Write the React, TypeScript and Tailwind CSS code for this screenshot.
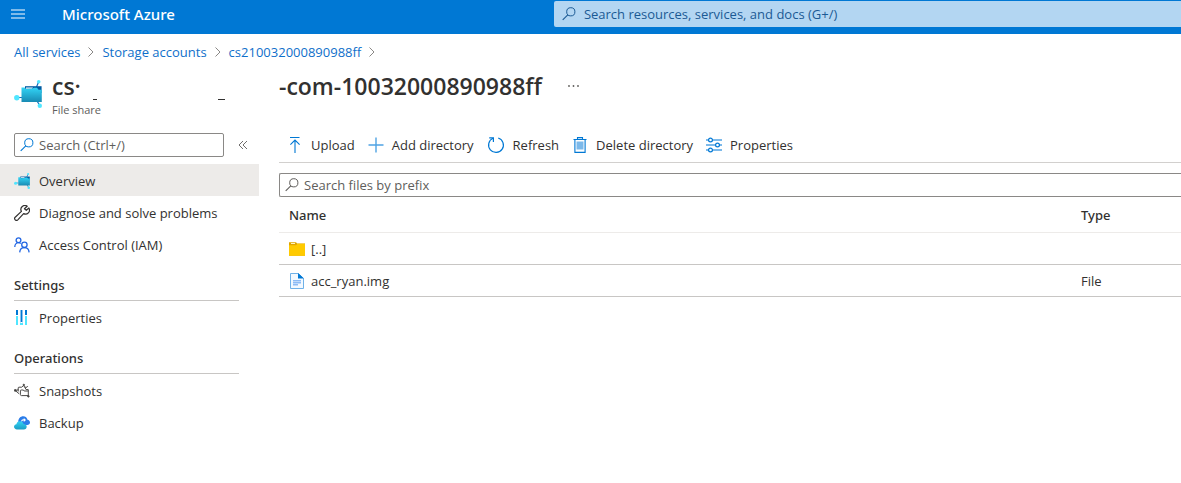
import React from "react";

type IconProps = { className?: string };

function SearchIcon({ className = "" }: IconProps) {
  return (
    <svg viewBox="0 0 14 14" className={`shrink-0 ${className}`} fill="none" stroke="currentColor" aria-hidden="true">
      <circle cx="8.8" cy="4.8" r="4.1" strokeWidth="1" />
      <path d="M5.8 7.8 L0.7 12.9" strokeWidth="1.1" />
    </svg>
  );
}

function ChevronIcon() {
  return (
    <svg viewBox="0 0 8 12" className="h-3 w-2 shrink-0" fill="none" stroke="#8a8886" aria-hidden="true">
      <path d="M1.5 1.5 L6 6 L1.5 10.5" />
    </svg>
  );
}

function FileShareIcon({ className = "" }: IconProps) {
  const id = React.useId();
  return (
    <svg viewBox="0 0 28 28" className={`shrink-0 ${className}`} aria-hidden="true">
      <defs>
        <linearGradient id={id} x1="0" y1="0" x2="0" y2="1">
          <stop offset="0" stopColor="#32d4f5" />
          <stop offset="1" stopColor="#198ab3" />
        </linearGradient>
      </defs>
      <path d="M3 17.5 H8 M22.5 7 L24.6 2 M23 21 L25.8 25.5" stroke="#0f6cbd" strokeWidth="1.2" />
      <path d="M11 6.2 H27.6 V13 H11 Z" fill="#005ba1" />
      <path d="M12 7.4 H19 L18 8.8 H12 Z" fill="#fff" />
      <path d="M7.5 7.5 H10.6 L12 9 L18.6 8.6 L20 7.8 H23 L24.5 9.8 H27.8 V22 H7.5 Z" fill={`url(#${id})`} />
      <circle cx="2.8" cy="17.8" r="2.7" fill="#50e6ff" />
      <circle cx="24.7" cy="1.8" r="1.8" fill="#50e6ff" />
      <circle cx="25.8" cy="25.8" r="2.2" fill="#50e6ff" />
    </svg>
  );
}

function WrenchIcon() {
  return (
    <svg viewBox="0 0 16 16" className="h-4 w-4" fill="none" stroke="#323130" strokeWidth="1.2" strokeLinejoin="round" aria-hidden="true">
      <path d="M13.2 1.2 A4 4 0 0 0 7.4 6.4 L1.2 12.2 A1.7 1.7 0 0 0 3.8 14.8 L9.6 8.6 A4 4 0 0 0 14.9 3 L12.3 5.3 L10.4 3.8 Z" />
    </svg>
  );
}

function PeopleIcon() {
  return (
    <svg viewBox="0 0 16 16" className="h-4 w-4" fill="none" stroke="#2266e3" strokeWidth="1.3" aria-hidden="true">
      <circle cx="4.5" cy="3.2" r="2.4" />
      <path d="M0.8 10 C0.8 7.5 2.5 5.7 4.5 5.7 C5.4 5.7 6.2 6 6.8 6.5" />
      <circle cx="10.4" cy="7.8" r="2.7" />
      <path d="M5.7 15.4 C5.9 12.6 7.9 10.6 10.4 10.6 C12.9 10.6 14.9 12.6 15.1 15.4" />
    </svg>
  );
}

function BarsIcon() {
  return (
    <svg viewBox="0 0 16 16" className="h-4 w-4" aria-hidden="true">
      <path d="M2 0 H4 V5 H2 Z M11 0 H13 V5 H11 Z M6.5 0 H8.5 V12 H6.5 Z" fill="#0078d4" />
      <path d="M2 6 H4 V15 H2 Z M11 6 H13 V15 H11 Z M6 13 H9 V15 H6 Z" fill="#50e6ff" />
      <path d="M6 0 H6.5 V13 H6 Z M8.5 0 H9 V13 H8.5 Z" fill="#9cc9ef" />
    </svg>
  );
}

function SnapshotIcon() {
  return (
    <svg viewBox="0 0 16 16" className="h-4 w-4" fill="none" stroke="#4a4846" aria-hidden="true">
      <path d="M1.2 7.4 L4.4 6.8 M4.2 8.5 V5 Q4.2 4.2 5 4.2 H7.6 L9.8 2.4 L10.6 4.2 H13 L13.8 3.2" />
      <path d="M1.8 8 L5.2 10.8 M6.4 11.4 V7.8 Q6.4 7 7.2 7 H9.4 L10.2 8 H14.3 V12.6 H7.4 Q6.4 12.6 6.4 11.4 M10.8 4.2 L12 6.6 H14.3 V8" />
      <circle cx="1.2" cy="7.4" r="0.9" fill="#323130" />
      <circle cx="9.8" cy="1.9" r="0.7" fill="#323130" />
      <circle cx="14.4" cy="13.3" r="0.8" fill="#323130" />
    </svg>
  );
}

function BackupIcon() {
  return (
    <svg viewBox="0 0 16 16" className="h-4 w-4" aria-hidden="true">
      <defs>
        <linearGradient id="backup-cloud" x1="0" y1="0" x2="0" y2="1">
          <stop offset="0" stopColor="#32d4f5" />
          <stop offset="1" stopColor="#1c9dc4" />
        </linearGradient>
      </defs>
      <path d="M4.2 6.5 C4.4 3.4 6.4 1.2 9.2 1.2 C11.6 1.2 13.2 2.7 13.5 4.8 C15 5 16 6.1 16 7.5 C16 9 14.8 10 13.3 10 H6 Z" fill="#2b7de9" />
      <path d="M7.2 6.4 C7.2 4.8 8.2 3.9 9.8 4.2 V3 L12 5 L9.8 6.9 V5.6 C8.8 5.4 8.2 5.8 8 6.6 Z" fill="#fff" />
      <path d="M3 14.4 C1.3 14.4 0 13.3 0 11.8 C0 10.4 1.1 9.4 2.4 9.2 C2.7 7.4 4.1 6.2 6 6.2 C7.8 6.2 9.2 7.3 9.6 9 C11.4 9 12.7 10.1 12.7 11.7 C12.7 13.3 11.5 14.4 9.9 14.4 Z" fill="url(#backup-cloud)" />
    </svg>
  );
}

function UploadIcon() {
  return (
    <svg viewBox="0 0 16 16" className="h-4 w-4" fill="none" stroke="#0078d4" aria-hidden="true">
      <path d="M3 0.5 H12.5 M8 16 V3.2 M3.4 7.6 L8 3 L12.6 7.6" strokeWidth="1.1" />
    </svg>
  );
}

function PlusIcon() {
  return (
    <svg viewBox="0 0 16 16" className="h-4 w-4" fill="none" stroke="#4fa3e3" aria-hidden="true">
      <path d="M0.5 8 H15.5 M8 0.5 V15.5" strokeWidth="1.4" />
    </svg>
  );
}

function RefreshIcon() {
  return (
    <svg viewBox="0 0 18 18" className="h-[18px] w-[18px]" fill="none" stroke="#0078d4" strokeWidth="1.2" aria-hidden="true">
      <path d="M11.2 2 A7.4 7.4 0 1 1 6 2.3" />
      <path d="M2.2 1.8 H6.4 V6" />
    </svg>
  );
}

function TrashIcon() {
  return (
    <svg viewBox="0 0 16 16" className="h-4 w-4" aria-hidden="true">
      <path d="M4.5 4.5 H11.5 V12.5 H4.5 Z" fill="#7cb9ea" />
      <path d="M1.5 2.5 H14.5 M5.5 2.5 V0.6 H10.5 V2.5 M2.9 2.5 V15.4 H13.1 V2.5" fill="none" stroke="#0078d4" strokeWidth="1.1" />
    </svg>
  );
}

function SlidersIcon() {
  return (
    <svg viewBox="0 0 16 16" className="h-4 w-4" aria-hidden="true">
      <path d="M0 3 H16 M0 8 H16 M0 13 H16" stroke="#7cb9ea" strokeWidth="1.8" />
      <g fill="#fff" stroke="#0078d4" strokeWidth="1.2">
        <circle cx="4.5" cy="3" r="1.9" />
        <circle cx="11.5" cy="8" r="1.9" />
        <circle cx="4.5" cy="13" r="1.9" />
      </g>
    </svg>
  );
}

function FolderIcon() {
  return (
    <svg viewBox="0 0 16 16" className="h-4 w-4 shrink-0" aria-hidden="true">
      <path d="M0 1.2 H7 L8.2 2.6 H16 V14.7 H0 Z" fill="#dfa500" />
      <path d="M2 2 H6 V3 H2 Z" fill="#fff3c0" />
      <path d="M0 4.2 H7 L8.5 2.8 H16 V14.7 H0 Z" fill="#ffca00" />
    </svg>
  );
}

function FileIcon() {
  return (
    <svg viewBox="0 0 16 16" className="h-4 w-4 shrink-0" aria-hidden="true">
      <path d="M1.5 0.5 H9.5 L14.5 5.5 V15.5 H1.5 Z" fill="#f3f9ff" stroke="#6fb1e8" />
      <path d="M9 0 L15 5.6 H9 Z" fill="#0078d4" />
      <path d="M4 7.8 H12 M4 9.8 H12 M4 11.8 H9" stroke="#8dbbf5" strokeWidth="1.4" />
    </svg>
  );
}

function MenuItem({ icon, label, active = false }: { icon: React.ReactNode; label: string; active?: boolean }) {
  return (
    <li>
      <a
        href="#"
        aria-current={active ? "page" : undefined}
        className={`flex h-8 items-center gap-[9px] pt-0.5 pl-3.5 ${active ? "bg-[#edebe9]" : ""}`}
      >
        <span className="flex h-4 w-4 shrink-0 items-center justify-center">{icon}</span>
        {label}
      </a>
    </li>
  );
}

function MenuSection({ title, children }: { title: string; children: React.ReactNode }) {
  return (
    <section className="pt-[9px]">
      <h2 className="mr-5 ml-3.5 flex h-8 items-center border-b border-[#c8c6c4] font-['Noto_Sans','Open_Sans',sans-serif] font-medium">
        {title}
      </h2>
      <ul>{children}</ul>
    </section>
  );
}

function ToolButton({ icon, label }: { icon: React.ReactNode; label: string }) {
  return (
    <button type="button" className="flex h-8 items-center gap-2 pt-0.5 whitespace-nowrap">
      {icon}
      {label}
    </button>
  );
}

const crumbs = ["All services", "Storage accounts", "cs210032000890988ff"];

const files = [
  { name: "[..]", type: "", icon: <FolderIcon /> },
  { name: "acc_ryan.img", type: "File", icon: <FileIcon /> },
];

export default function App() {
  return (
    <div className="min-h-screen overflow-x-hidden bg-white font-['Open_Sans','Noto_Sans',sans-serif] text-[13px] leading-5 text-[#323130]">
      <header className="flex h-[34px] items-start bg-[#0078d4] text-white">
        <div className="flex h-7 flex-1 items-center">
          <button type="button" aria-label="Show portal menu" className="ml-[11px]">
            <svg viewBox="0 0 14 10" className="h-2.5 w-3.5" stroke="#80bbe9" strokeWidth="2" aria-hidden="true">
              <path d="M0 1 H14 M0 5 H14 M0 9 H14" />
            </svg>
          </button>
          <a href="#" className="ml-[37px] font-['Noto_Sans','Open_Sans',sans-serif] text-[15px] font-medium">
            Microsoft Azure
          </a>
        </div>
        <label className="mt-px flex h-[26px] w-[53.1%] items-center gap-2 rounded-l-xs bg-[#b3d6f2] pl-2 text-[#1b5a94]">
          <SearchIcon className="h-3.5 w-3.5" />
          <input
            type="search"
            aria-label="Search resources, services, and docs"
            placeholder="Search resources, services, and docs (G+/)"
            className="min-w-0 flex-1 bg-transparent outline-none placeholder:text-[#1b5a94]"
          />
        </label>
      </header>

      <nav aria-label="Breadcrumb" className="flex h-9 items-center pl-3.5 text-[#0f6fca]">
        <ol className="flex items-center gap-[7px]">
          {crumbs.map((crumb) => (
            <li key={crumb} className="flex items-center gap-[7px]">
              <a href="#">{crumb}</a>
              <ChevronIcon />
            </li>
          ))}
        </ol>
      </nav>

      <div className="flex h-[55px] items-start pl-3.5">
        <FileShareIcon className="mt-2.5 h-7 w-7" />
        <div className="ml-2.5 w-[227px]">
          <div className="flex h-8 items-center text-[23px] font-semibold">
            <span>cs·</span>
            <svg viewBox="0 0 160 32" className="h-8 w-40" stroke="#323130" aria-hidden="true">
              <path d="M12 29.5 H16 M137 29.5 H144" />
            </svg>
          </div>
          <p className="text-[11px] leading-4 text-[#605e5c]">File share</p>
        </div>
        <h1 className="text-[23px] leading-8 font-semibold">-com-10032000890988ff</h1>
        <button type="button" aria-label="More actions" className="ml-6 h-8">
          <svg viewBox="0 0 14 4" className="h-1 w-3.5" fill="#605e5c" aria-hidden="true">
            <circle cx="3" cy="2" r="0.9" />
            <circle cx="7.5" cy="2" r="0.9" />
            <circle cx="12" cy="2" r="0.9" />
          </svg>
        </button>
      </div>

      <div className="flex">
        <aside className="w-[259px] shrink-0">
          <div className="flex items-center pt-2 pb-[7px] pl-3.5">
            <label className="flex h-6 w-[210px] items-center gap-[5px] rounded-xs border border-[#8a8886] pl-[5px]">
              <SearchIcon className="h-3.5 w-3.5 text-[#0078d4]" />
              <input
                type="search"
                aria-label="Search menu"
                placeholder="Search (Ctrl+/)"
                className="min-w-0 flex-1 bg-transparent outline-none placeholder:text-[#605e5c]"
              />
            </label>
            <button type="button" aria-label="Collapse menu" className="ml-3.5">
              <svg viewBox="0 0 10 10" className="h-2.5 w-2.5" fill="none" stroke="#605e5c" strokeWidth="0.9" aria-hidden="true">
                <path d="M5 1 L1 5 L5 9 M9 1 L5 5 L9 9" />
              </svg>
            </button>
          </div>
          <ul>
            <MenuItem icon={<FileShareIcon className="h-4 w-4" />} label="Overview" active />
            <MenuItem icon={<WrenchIcon />} label="Diagnose and solve problems" />
            <MenuItem icon={<PeopleIcon />} label="Access Control (IAM)" />
          </ul>
          <MenuSection title="Settings">
            <MenuItem icon={<BarsIcon />} label="Properties" />
          </MenuSection>
          <MenuSection title="Operations">
            <MenuItem icon={<SnapshotIcon />} label="Snapshots" />
            <MenuItem icon={<BackupIcon />} label="Backup" />
          </MenuSection>
        </aside>

        <main className="min-w-0 flex-1 pl-5">
          <div className="flex h-[38px] items-center gap-[13px] border-b border-[#d2d0ce] pl-2">
            <ToolButton icon={<UploadIcon />} label="Upload" />
            <ToolButton icon={<PlusIcon />} label="Add directory" />
            <ToolButton icon={<RefreshIcon />} label="Refresh" />
            <ToolButton icon={<TrashIcon />} label="Delete directory" />
            <ToolButton icon={<SlidersIcon />} label="Properties" />
          </div>
          <label className="mt-2.5 flex h-6 items-center gap-[5px] rounded-l-xs border border-r-0 border-[#8a8886] pl-[5px]">
            <SearchIcon className="h-3.5 w-3.5 text-[#605e5c]" />
            <input
              type="search"
              aria-label="Search files by prefix"
              placeholder="Search files by prefix"
              className="min-w-0 flex-1 bg-transparent outline-none placeholder:text-[#605e5c]"
            />
          </label>
          <table className="w-full table-fixed text-left">
            <thead>
              <tr className="h-[35px] border-b border-[#edebe9] font-['Noto_Sans','Open_Sans',sans-serif]">
                <th scope="col" className="pt-0.5 pl-2.5 font-medium">Name</th>
                <th scope="col" className="w-[100px] pt-0.5 font-medium">Type</th>
              </tr>
            </thead>
            <tbody>
              {files.map((file) => (
                <tr key={file.name} className="h-8 border-b border-[#c8c6c4]">
                  <td className="pt-0.5 pl-2.5">
                    <a href="#" className="flex items-center gap-1.5">
                      {file.icon}
                      {file.name}
                    </a>
                  </td>
                  <td className="pt-0.5">{file.type}</td>
                </tr>
              ))}
            </tbody>
          </table>
        </main>
      </div>
    </div>
  );
}
